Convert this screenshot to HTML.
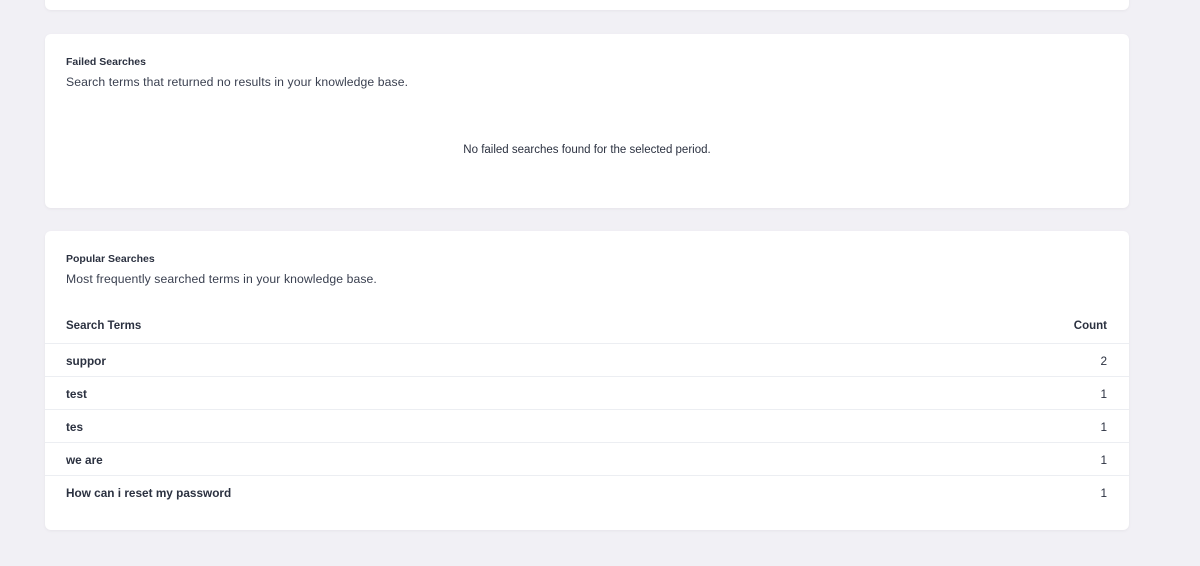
<html><head><style>
body{margin:0;background:#f1f0f5;font-family:"Liberation Sans",sans-serif;color:#2b3140;width:1200px;height:566px;overflow:hidden;position:relative}
.card{position:absolute;left:45px;width:1084px;background:#fff;border-radius:6px;box-shadow:0 1px 3px rgba(0,0,0,.05)}
.t{position:absolute;left:21px;font-size:10.5px;font-weight:bold}
.s{position:absolute;left:21px;font-size:12.2px;color:#3a4050;letter-spacing:0.1px}
.row{position:absolute;left:0;right:0;height:33px;border-top:1px solid #eceef2;font-size:11.8px;font-weight:bold}
.row span{position:absolute;left:21px;top:10px}
.row b{position:absolute;right:22px;top:10px;font-weight:normal}
</style></head><body>
<div class="card" style="top:-20px;height:30px"></div>
<div class="card" style="top:34px;height:174px">
<div class="t" style="top:22px">Failed Searches</div>
<div class="s" style="top:41px">Search terms that returned no results in your knowledge base.</div>
<div style="position:absolute;left:0;right:0;top:110px;text-align:center;font-size:11.5px">No failed searches found for the selected period.</div>
</div>
<div class="card" style="top:231px;height:299px">
<div class="t" style="top:22px">Popular Searches</div>
<div class="s" style="top:41px">Most frequently searched terms in your knowledge base.</div>
<div style="position:absolute;left:21px;top:89px;font-size:11.5px;font-weight:bold">Search Terms</div>
<div style="position:absolute;right:22px;top:89px;font-size:11.5px;font-weight:bold">Count</div>
<div class="row" style="top:112px"><span>suppor</span><b>2</b></div>
<div class="row" style="top:145px"><span>test</span><b>1</b></div>
<div class="row" style="top:178px"><span>tes</span><b>1</b></div>
<div class="row" style="top:211px"><span>we are</span><b>1</b></div>
<div class="row" style="top:244px"><span>How can i reset my password</span><b>1</b></div>
</div>
</body></html>
